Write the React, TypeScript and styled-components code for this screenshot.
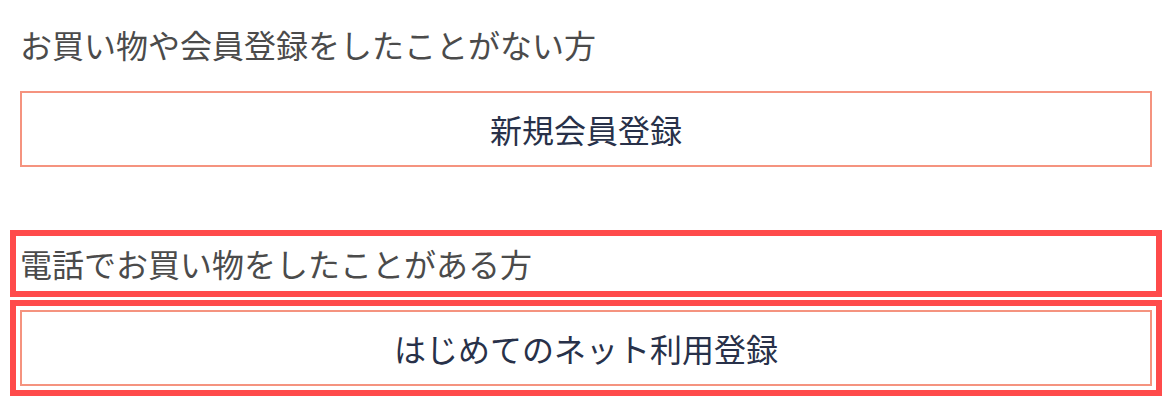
import React from "react";
import styled, { createGlobalStyle, css } from "styled-components";

const GlobalStyle = createGlobalStyle`
  html, body {
    margin: 0;
    padding: 0;
    background: #ffffff;
  }
  body {
    font-family: "Noto Sans CJK JP", "Noto Sans", sans-serif;
  }
`;

const Page = styled.div`
  display: flex;
  flex-direction: column;
  padding: 21px 20px 20px;
  width: 1172px;
  box-sizing: border-box;
`;

const Section = styled.section<{ $spaced?: boolean }>`
  display: flex;
  flex-direction: column;
  gap: 23px;
  margin-top: ${(p) => (p.$spaced ? "73px" : "0")};
`;

const highlight = css`
  outline: 6px solid #ff4b4b;
  outline-offset: 4px;
`;

const Heading = styled.h2<{ $highlight?: boolean }>`
  margin: 0;
  height: 47px;
  line-height: 47px;
  font-size: 32px;
  font-weight: 400;
  color: #4b4b4b;
  white-space: nowrap;
  ${(p) => p.$highlight && highlight}
`;

const ActionButton = styled.button<{ $highlight?: boolean }>`
  display: flex;
  align-items: center;
  justify-content: center;
  height: 76px;
  width: 100%;
  box-sizing: border-box;
  border: 2px solid #f5937f;
  background: #ffffff;
  color: #283149;
  font-family: "Noto Sans CJK JP", "Noto Sans", sans-serif;
  font-size: 32px;
  font-weight: 400;
  padding: 0;
  cursor: pointer;
  ${(p) => p.$highlight && highlight}
`;

export default function App() {
  return (
    <>
      <GlobalStyle />
      <Page>
        <Section>
          <Heading>お買い物や会員登録をしたことがない方</Heading>
          <ActionButton>新規会員登録</ActionButton>
        </Section>
        <Section $spaced>
          <Heading $highlight>電話でお買い物をしたことがある方</Heading>
          <ActionButton $highlight>はじめてのネット利用登録</ActionButton>
        </Section>
      </Page>
    </>
  );
}
